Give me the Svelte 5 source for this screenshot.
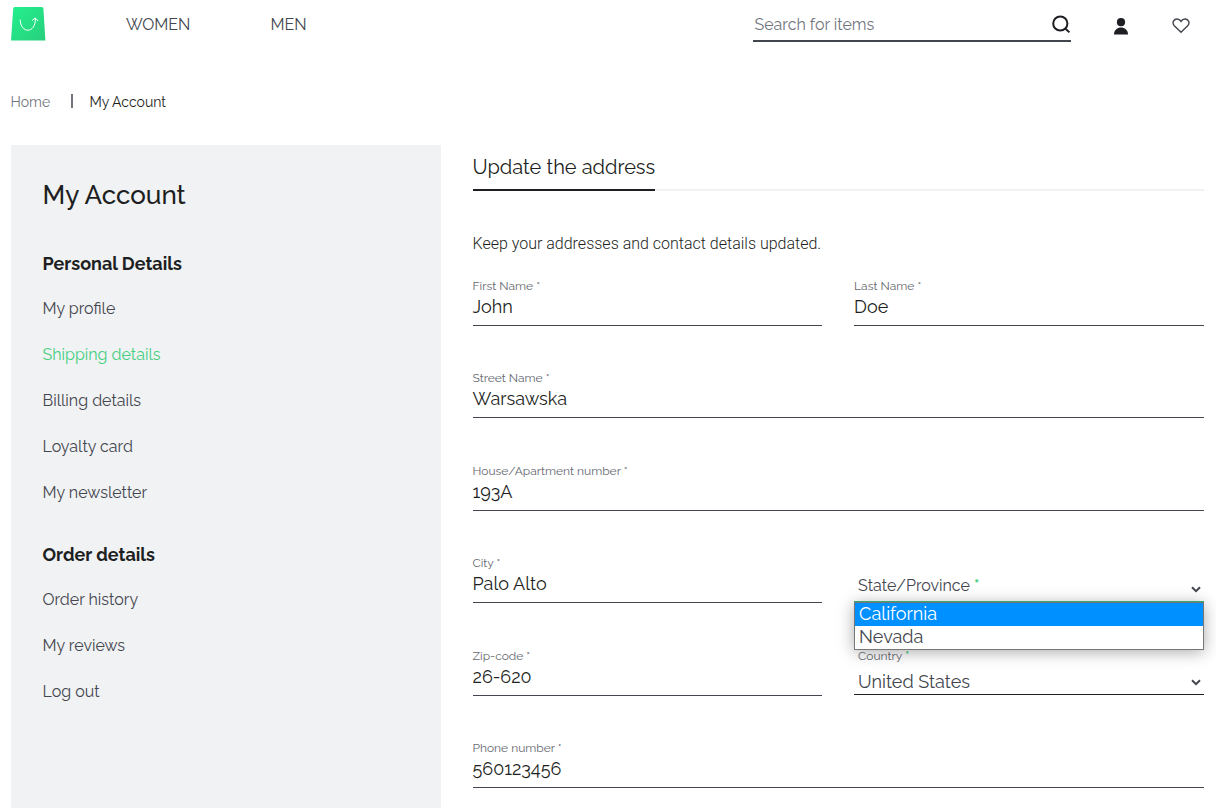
<script>
  const personal = ['My profile', 'Shipping details', 'Billing details', 'Loyalty card', 'My newsletter'];
  const orders = ['Order history', 'My reviews', 'Log out'];
  const active = 'Shipping details';
</script>

{#snippet field(label, value, wide)}
  <div class="field" class:wide>
    <div class="label">{label} *</div>
    <div class="value">{value}</div>
  </div>
{/snippet}

{#snippet chevron()}
  <svg class="chevron" width="10" height="7" viewBox="0 0 10 7"><path d="M1 1.2 5 5.1 9 1.2" fill="none" stroke="#43464e" stroke-width="2" /></svg>
{/snippet}

<header>
  <svg class="logo" width="35" height="34" viewBox="0 0 35 34">
    <defs><linearGradient id="bag" x1="0" y1="0" x2="1" y2="1"><stop offset="0" stop-color="#23f08f" /><stop offset="1" stop-color="#29cf7c" /></linearGradient></defs>
    <path d="M3.8 0H30.8Q32.3 0 32.4 1.5L34.4 33.6H0L2.2 1.5Q2.3 0 3.8 0Z" fill="url(#bag)" />
    <path d="M9.2 13C9.5 27 24.8 27 24.4 11.7M21.4 13.2 24.3 11 26.9 13.8" fill="none" stroke="#fff" stroke-width="1" stroke-linecap="round" />
  </svg>
  <nav><span>WOMEN</span><span>MEN</span></nav>
  <div class="search">
    <span>Search for items</span>
    <svg width="19" height="19" viewBox="0 0 19 19"><circle cx="8.3" cy="8.5" r="7.1" /><path d="m13 13.2 4.4 4.2" /></svg>
  </div>
  <svg class="person" width="14" height="17" viewBox="0 0 14 17"><circle cx="7" cy="4.2" r="4.1" /><path d="M0 16.5C-.2 7 14.2 7 14 16.5Z" /></svg>
  <svg class="heart" width="18" height="16" viewBox="0 0 18 16"><path d="M9 14.3 2.3 7.8C-.7 4.3 2.2 1 5 1 6.8 1 8.2 2 9 3.4 9.8 2 11.2 1 13 1c2.8 0 5.7 3.3 2.7 6.8Z" /></svg>
</header>

<div class="crumbs"><span class="home">Home</span><i></i><span>My Account</span></div>

<main>
  <aside>
    <h1>My Account</h1>
    <h2>Personal Details</h2>
    <ul>
      {#each personal as item}<li class:active={item === active}>{item}</li>{/each}
    </ul>
    <h2>Order details</h2>
    <ul>
      {#each orders as item}<li>{item}</li>{/each}
    </ul>
  </aside>
  <section>
    <div class="tabs"><div class="tab">Update the address</div></div>
    <p>Keep your addresses and contact details updated.</p>
    <div class="form">
      {@render field('First Name', 'John', false)}
      {@render field('Last Name', 'Doe', false)}
      {@render field('Street Name', 'Warsawska', true)}
      {@render field('House/Apartment number', '193A', true)}
      {@render field('City', 'Palo Alto', false)}
      <div class="field select open">
        <div class="placeholder">State/Province<b>*</b></div>
        {@render chevron()}
        <div class="menu">
          <div class="option chosen">California</div>
          <div class="option">Nevada</div>
        </div>
      </div>
      {@render field('Zip-code', '26-620', false)}
      <div class="field select">
        <div class="label">Country<b>*</b></div>
        <div class="value">United States</div>
        {@render chevron()}
      </div>
      {@render field('Phone number', '560123456', true)}
    </div>
  </section>
</main>

<style>
  :global(body) { background: #fff; overflow: hidden; }
  :global(#app) {
    height: 808px; overflow: hidden; box-sizing: border-box; padding: 0 12px 0 10.5px;
    font-family: Raleway, Lato, sans-serif; color: #1d1f22;
    font-variant-numeric: oldstyle-nums; white-space: nowrap;
  }
  svg { display: block; flex: none; }
  header { display: flex; align-items: flex-start; height: 50px; color: #43464e; font-size: 16px; }
  .logo { margin: 7px 0 0 .5px; }
  nav { display: flex; gap: 80px; margin-left: 80px; line-height: 26px; padding-top: 12px; flex: 1; }
  .search {
    display: flex; align-items: flex-start; justify-content: space-between; box-sizing: border-box;
    width: 318px; height: 42px; padding: 12px 0 0 1.5px; border-bottom: 2px solid #43464e;
    line-height: 26px; color: #72757e;
  }
  .search svg { margin-top: 3px; fill: none; stroke: #1d1f22; stroke-width: 2; }
  .person { margin: 18px 0 0 43px; fill: #1d1f22; }
  .heart { margin: 18px 14px 0 44px; fill: none; stroke: #43464e; stroke-width: 1.4; }
  .crumbs { display: flex; align-items: center; height: 20px; margin-top: 42px; font-size: 14px; }
  .home { color: #72757e; width: 60.5px; }
  .crumbs i { width: 1.5px; height: 14px; background: #72757e; margin-right: 17px; transform: translateY(-1px); }
  main { display: flex; gap: 32px; margin-top: 33px; height: 663px; }
  aside { width: 430px; box-sizing: border-box; background: #f1f2f4; padding: 32px; flex: none; }
  h1 { margin: 0; font-size: 26px; line-height: 36px; font-weight: 500; }
  h2 { margin: 36px 0 0; font-size: 18px; line-height: 30px; font-weight: 700; height: 30px; }
  ul { list-style: none; margin: 7px 0 0; padding: 0; color: #43464e; font-size: 16px; }
  li { height: 46px; line-height: 46px; }
  ul + h2 { margin-top: 24px; }
  .active { color: #45cf7f; }
  section { flex: 1; min-width: 0; }
  .tabs { display: flex; height: 44px; border-bottom: 2px solid #f1f2f4; }
  .tab { height: 44px; line-height: 44px; font-size: 20px; border-bottom: 2px solid #1d1f22; }
  p { margin: 39px 0 0; height: 28px; font: 300 16px/28px Roboto, sans-serif; }
  .form { display: grid; grid-template-columns: 349.6px 349.9px; column-gap: 32px; row-gap: 45.4px; margin-top: 21px; }
  .field { height: 47px; box-sizing: border-box; border-bottom: 1px solid #43464e; }
  .wide { grid-column: span 2; }
  .label { height: 14px; line-height: 14px; font-size: 12px; color: #65686f; }
  .value { height: 27px; line-height: 27px; font-size: 18px; }
  .select { position: relative; height: 46px; padding-left: 4px; border-color: #1d1f22; color: #43464e; }
  .select .value { padding-top: 5px; }
  .select b { color: #45cf7f; font-weight: 600; margin-left: 4px; }
  .select .label b { margin-left: 3px; }
  .placeholder { padding-top: 18px; line-height: 24px; font-size: 16px; }
  .chevron { position: absolute; right: 3px; bottom: 8px; }
  .menu {
    position: absolute; z-index: 2; left: 0; right: 0; top: 46px; height: 48px; box-sizing: border-box;
    border: 1px solid #767676; background: #fff;
    box-shadow: 0 2px 16px rgba(0, 0, 0, .34);
  }
  .menu::before { content: ''; position: absolute; left: -1px; right: -1px; top: -2px; height: 1px; background: #3da570; }
  .option { height: 23px; line-height: 22px; font-size: 18px; padding-left: 4px; }
  .chosen { line-height: 22px; background: #0090ff; color: #fff; }
</style>
